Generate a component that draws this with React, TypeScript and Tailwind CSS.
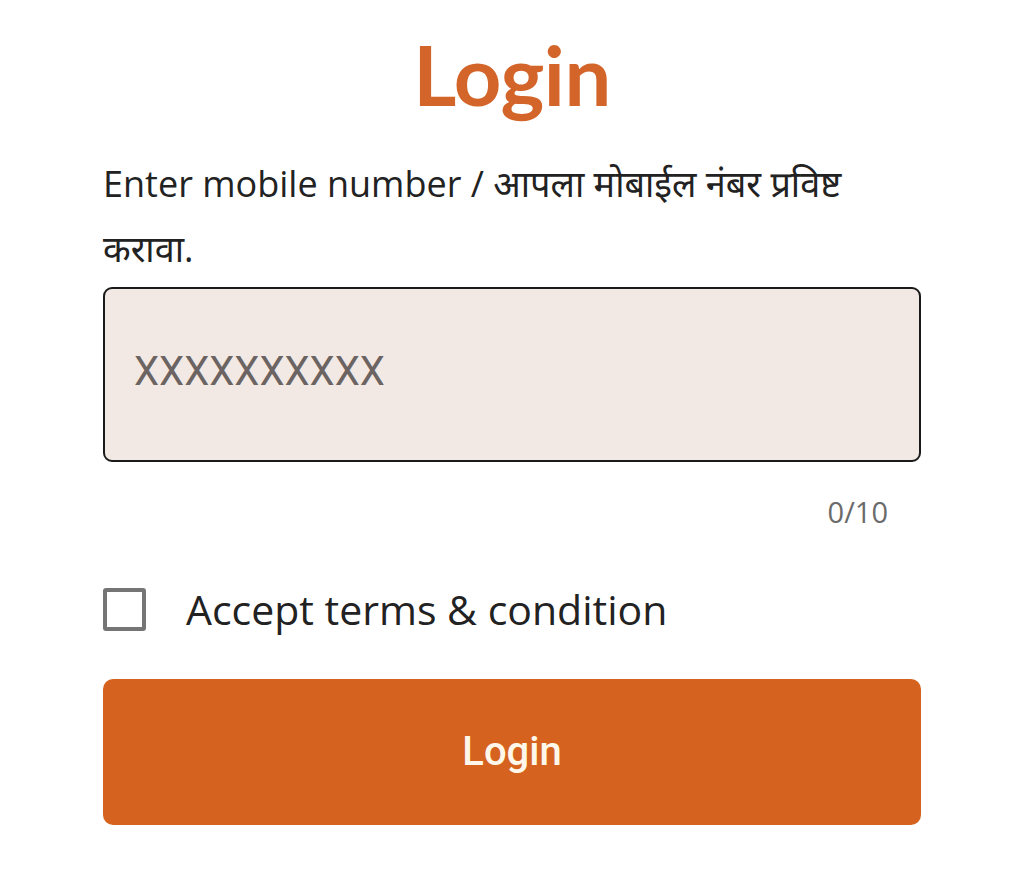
import React from "react";

export default function App() {
  return (
    <div className="w-[1024px] h-[892px] bg-white px-[103px] overflow-hidden" style={{ fontFamily: '"Open Sans", "Noto Sans Devanagari", "Noto Sans", sans-serif' }}>
      <h1 className="text-center text-[#d4652a] font-bold text-[83px] leading-[100px] pt-[24px] tracking-[-0.5px]" style={{ fontFamily: 'Lato, "Open Sans", sans-serif' }}>
        Login
      </h1>
      <p className="mt-[27px] text-[36px] leading-[65px] text-[#222222]">
        Enter mobile number / आपला मोबाईल नंबर प्रविष्ट करावा.
      </p>
      <div className="mt-[6px] h-[175px] rounded-[9px] border-2 border-[#1a1a1a] bg-[#f3e9e4] flex items-center px-[29px] pb-[6px]">
        <span className="text-[40px] text-[#6b6462]" style={{ fontFamily: 'Roboto, sans-serif' }}>XXXXXXXXXX</span>
      </div>
      <div className="flex justify-end pr-[33px] mt-[30px] text-[29px] leading-[40px] text-[#6b6b6b]">0/10</div>
      <div className="flex items-center mt-[56px] h-[43px]">
        <div className="w-[43px] h-[43px] rounded-[3px] border-[4px] border-[#757575] shrink-0" />
        <span className="ml-[40px] text-[41px] text-[#222222]">Accept terms &amp; condition</span>
      </div>
      <button className="mt-[48px] w-full h-[146px] rounded-[10px] bg-[#d5631f] text-[#fff8ea] text-[40px] font-medium flex items-center justify-center" style={{ fontFamily: 'Roboto, sans-serif' }}>
        Login
      </button>
    </div>
  );
}
